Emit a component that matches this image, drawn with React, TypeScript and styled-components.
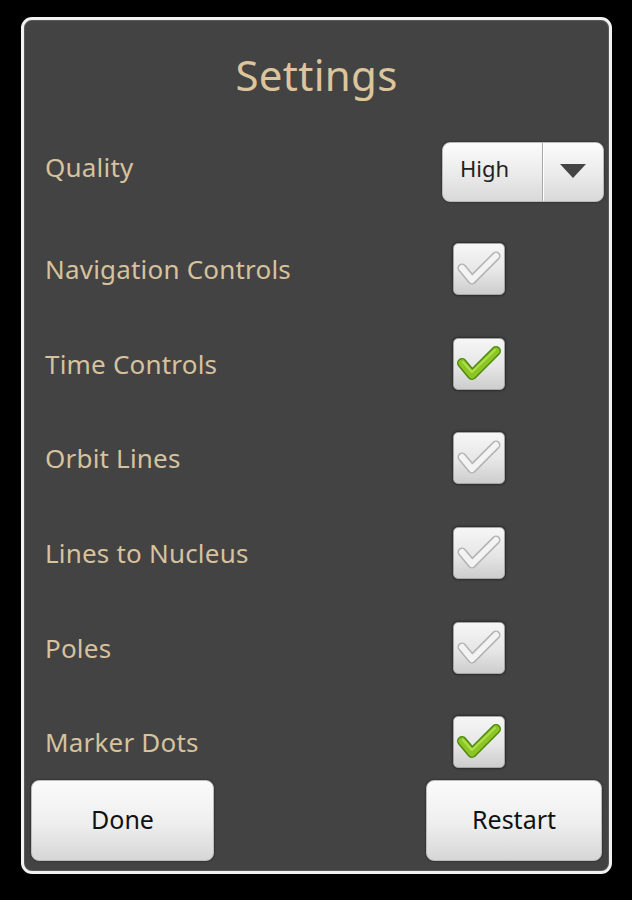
import React from "react";
import styled, { createGlobalStyle } from "styled-components";

const Global = createGlobalStyle`
  html, body {
    margin: 0;
    padding: 0;
    background: #000;
  }
  body {
    width: 632px;
    height: 900px;
    overflow: hidden;
    font-family: "Noto Sans", "Open Sans", sans-serif;
  }
`;

const Page = styled.div`
  width: 632px;
  height: 900px;
  padding: 17px 0 0 21px;
  box-sizing: border-box;
  background: #000;
`;

const Dialog = styled.div`
  width: 591px;
  height: 857px;
  box-sizing: border-box;
  border: 3px solid #f2f2f2;
  border-radius: 11px;
  background: #434343;
  box-shadow: inset 0 0 0 1px #5a5a5a;
  display: flex;
  flex-direction: column;
  overflow: hidden;
`;

const Title = styled.h1`
  margin: 0;
  height: 110px;
  line-height: 110px;
  text-align: center;
  font-size: 42px;
  font-weight: 400;
  color: #dcc59c;
  letter-spacing: 0.3px;
`;

const Row = styled.div<{ $h: number }>`
  height: ${(p) => p.$h}px;
  display: flex;
  align-items: center;
  padding-left: 21px;
  flex-shrink: 0;
`;

const Label = styled.span<{ $lift?: number }>`
  flex: 1;
  font-size: 26px;
  letter-spacing: 0.2px;
  color: #d6c29e;
  padding-bottom: ${(p) => p.$lift ?? 0}px;
`;

const ControlCell = styled.div`
  width: 162px;
  margin-right: 5px;
  display: flex;
  align-items: center;
`;

const Select = styled.div`
  width: 162px;
  height: 60px;
  box-sizing: border-box;
  border-radius: 8px;
  border: 1px solid #b9b9b9;
  background: linear-gradient(#fbfbfb 0%, #ececec 50%, #d9d9d9 100%);
  box-shadow: 0 0 2px rgba(0, 0, 0, 0.6);
  display: flex;
  overflow: hidden;
`;

const SelectValue = styled.div`
  width: 100px;
  padding: 0 0 8px 17px;
  box-sizing: border-box;
  display: flex;
  align-items: center;
  font-size: 22px;
  color: #222;
  border-right: 1px solid #a8a8a8;
  box-shadow: 1px 0 0 #fff;
`;

const SelectArrow = styled.div`
  flex: 1;
  display: flex;
  align-items: center;
  justify-content: center;
  padding-bottom: 2px;
`;

const ListArea = styled.div`
  margin-top: 8px;
  display: flex;
  flex-direction: column;
`;

const Box = styled.div`
  margin-left: 11px;
  width: 52px;
  height: 52px;
  box-sizing: border-box;
  border-radius: 5px;
  border: 1px solid #a5a5a5;
  background: linear-gradient(#f6f6f6 0%, #e6e6e6 55%, #cdcdcd 100%);
  box-shadow: 0 0 2px 1px rgba(0, 0, 0, 0.35);
  display: flex;
  align-items: center;
  justify-content: center;
`;

const Footer = styled.div`
  margin-top: -10px;
  padding: 0 7px;
  display: flex;
  justify-content: space-between;
`;

const Button = styled.button<{ $w: number }>`
  width: ${(p) => p.$w}px;
  height: 81px;
  border-radius: 8px;
  border: 1px solid #bcbcbc;
  background: linear-gradient(#fbfbfb 0%, #eeeeee 55%, #d6d6d6 100%);
  box-shadow: 0 0 2px rgba(0, 0, 0, 0.6);
  font-family: "Noto Sans", "Open Sans", sans-serif;
  font-size: 25px;
  color: #111;
  padding: 0 0 2px 0;
`;

const CheckMark: React.FC<{ on: boolean }> = ({ on }) => (
  <svg width="52" height="52" viewBox="0 0 52 52" style={{ marginLeft: -2, marginTop: -2 }}>
    <path
      d="M10 26 L20 38 L44 14"
      fill="none"
      stroke={on ? "#4f8a0c" : "#b3b3b3"}
      strokeWidth={on ? 10 : 9}
      strokeLinecap="round"
      strokeLinejoin="round"
    />
    <path
      d="M10 26 L20 38 L44 14"
      fill="none"
      stroke={on ? "#8cc524" : "#f3f3f3"}
      strokeWidth={on ? 7 : 6}
      strokeLinecap="round"
      strokeLinejoin="round"
    />
    {on && (
      <path
        d="M11 25 L20 35 L43 13"
        fill="none"
        stroke="#addf4e"
        strokeWidth={2}
        strokeLinecap="round"
        strokeLinejoin="round"
      />
    )}
  </svg>
);

const items: { label: string; on: boolean }[] = [
  { label: "Navigation Controls", on: false },
  { label: "Time Controls", on: true },
  { label: "Orbit Lines", on: false },
  { label: "Lines to Nucleus", on: false },
  { label: "Poles", on: false },
  { label: "Marker Dots", on: true },
];

export default function App() {
  return (
    <Page>
      <Global />
      <Dialog>
        <Title>Settings</Title>
        <Row $h={84}>
          <Label $lift={10}>Quality</Label>
          <ControlCell>
            <Select>
              <SelectValue>High</SelectValue>
              <SelectArrow>
                <svg width="28" height="16" viewBox="0 0 28 16">
                  <path d="M1 1 L27 1 L14 15 Z" fill="#444" />
                </svg>
              </SelectArrow>
            </Select>
          </ControlCell>
        </Row>
        <ListArea>
          {items.map((it) => (
            <Row $h={94.6} key={it.label}>
              <Label>{it.label}</Label>
              <ControlCell>
                <Box>
                  <CheckMark on={it.on} />
                </Box>
              </ControlCell>
            </Row>
          ))}
        </ListArea>
        <Footer>
          <Button $w={183}>Done</Button>
          <Button $w={176}>Restart</Button>
        </Footer>
      </Dialog>
    </Page>
  );
}
